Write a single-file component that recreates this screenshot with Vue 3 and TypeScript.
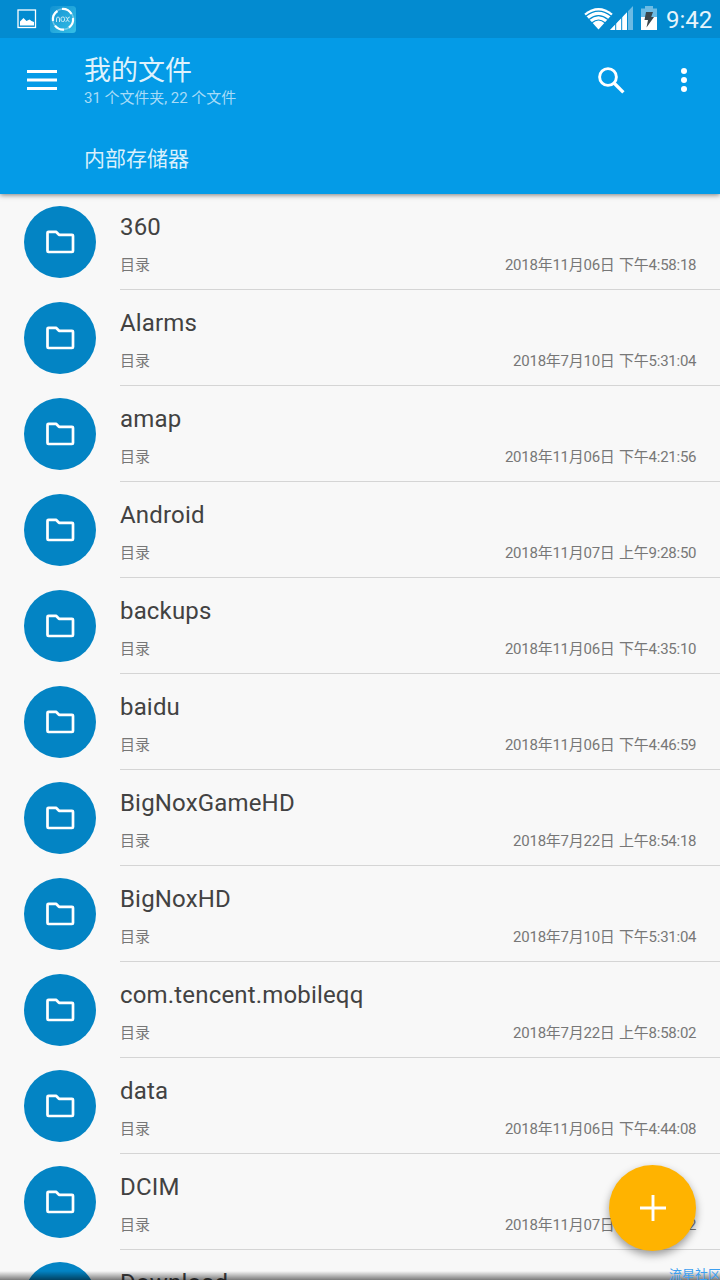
<script setup lang="ts">
interface Entry {
  name: string
  date: string
}

const entries: Entry[] = [
  { name: '360', date: '2018年11月06日 下午4:58:18' },
  { name: 'Alarms', date: '2018年7月10日 下午5:31:04' },
  { name: 'amap', date: '2018年11月06日 下午4:21:56' },
  { name: 'Android', date: '2018年11月07日 上午9:28:50' },
  { name: 'backups', date: '2018年11月06日 下午4:35:10' },
  { name: 'baidu', date: '2018年11月06日 下午4:46:59' },
  { name: 'BigNoxGameHD', date: '2018年7月22日 上午8:54:18' },
  { name: 'BigNoxHD', date: '2018年7月10日 下午5:31:04' },
  { name: 'com.tencent.mobileqq', date: '2018年7月22日 上午8:58:02' },
  { name: 'data', date: '2018年11月06日 下午4:44:08' },
  { name: 'DCIM', date: '2018年11月07日 上午9:28:52' },
  { name: 'Download', date: '' },
]
</script>

<template>
  <div class="screen">
    <div class="status">
      <svg class="s-pic" width="20" height="20" viewBox="0 0 20 20">
        <rect x="1" y="1" width="17.5" height="17.5" fill="none" stroke="#fff" stroke-width="1.3" />
        <path d="M3 16.500v-4l1.500-1.500 2-2 3 3 3-1.500 2 1.500 2.500 1v3.500z" fill="#fff" />
      </svg>
      <svg class="s-nox" width="26" height="27" viewBox="0 0 26 27">
        <defs>
          <linearGradient id="nox" x1="0" y1="0" x2="1" y2="1">
            <stop offset="0" stop-color="#1292d2" />
            <stop offset="1" stop-color="#35bfe6" />
          </linearGradient>
        </defs>
        <rect width="26" height="27" rx="3.500" fill="url(#nox)" />
        <g fill="none" stroke="#fff" stroke-width="2.200">
          <path d="M12 3a10.300 10.300 0 0 1 9.500 5" />
          <path d="M23 12a10.300 10.300 0 0 1-4 9.500" />
          <path d="M14 23.600a10.300 10.300 0 0 1-9-4" />
          <path d="M3 15a10.300 10.300 0 0 1 4.500-10" />
        </g>
        <circle cx="13" cy="13.300" r="10.300" fill="none" stroke="#fff" stroke-width="1.500" opacity=".35" />
        <g fill="none" stroke="#fff" stroke-width="1" opacity=".75">
          <path d="M6.500 16v-3q0-2 1.500-2t1.500 2v3" />
          <rect x="11" y="11" width="3.500" height="4.500" rx="1.500" />
          <path d="M15.500 11q1.500 0 2 2.300t2 2.300M19.800 11q-1.800 0-2.300 2.300t-2 2.300" />
        </g>
      </svg>
      <div class="grow"></div>
      <svg class="s-wifi" width="29" height="23" viewBox="0 0 29 23">
        <path d="M.3 6.800Q14.500-5 28.700 6.800L14.500 22.500z" fill="#fff" />
        <g fill="none" stroke="#038bd0" stroke-width="1.200">
          <path d="M2 9Q14.500-.7 27 9" />
          <path d="M5 12.500Q14.500 4.800 24 12.500" />
          <path d="M8 15.800Q14.500 10.200 21 15.800" />
        </g>
      </svg>
      <svg class="s-cell" width="23" height="24" viewBox="0 0 23 24">
        <path d="M0 24L23 0V24z" fill="#fff" opacity=".42" />
        <path d="M0 24L18 5.200V24z" fill="#fff" />
        <path d="M5.700 16v8M11.700 10v14M17.500 5v19" stroke="#038bd0" stroke-width="1" />
      </svg>
      <svg class="s-batt" width="16" height="24" viewBox="0 0 16 24">
        <path d="M0 2.500h4V0h8v2.500h4V11H0z" fill="#fff" opacity=".42" />
        <path d="M0 11h16v13H0z" fill="#fff" />
        <path d="M5 6h7l-1.800 5H13L5.500 21.500 7 14H3.500z" fill="#39454b" />
      </svg>
      <span class="clock">9:42</span>
    </div>

    <header class="appbar">
      <div class="toolbar">
        <svg class="menu" width="30" height="20" viewBox="0 0 30 20">
          <path d="M0 1.500h30M0 10h30M0 18.500h30" stroke="#fff" stroke-width="3" />
        </svg>
        <div class="titles">
          <div class="title">我的文件</div>
          <div class="subtitle">31 个文件夹, 22 个文件</div>
        </div>
        <svg class="search" width="27" height="27" viewBox="0 0 27 27" fill="none" stroke="#fff">
          <circle cx="10" cy="10" r="8.400" stroke-width="2.900" />
          <path d="M16 16l9.400 9.400" stroke-width="3.300" />
        </svg>
        <svg class="more" width="6" height="24" viewBox="0 0 6 24" fill="#fff">
          <circle cx="3" cy="3" r="3" /><circle cx="3" cy="12" r="3" /><circle cx="3" cy="21" r="3" />
        </svg>
      </div>
      <div class="crumb">内部存储器</div>
    </header>

    <main class="list">
      <div v-for="e in entries" :key="e.name" class="row">
        <div class="avatar">
          <svg width="30" height="24" viewBox="0 0 30 24">
            <path d="M3.500 1.800h7.500l3 3H27q1 0 1 1V21q0 1-1 1H3.500q-1 0-1-1V2.800q0-1 1-1z" fill="none" stroke="#fff" stroke-width="2.700" stroke-linejoin="round" />
          </svg>
        </div>
        <div class="info">
          <div class="name">{{ e.name }}</div>
          <div v-if="e.date" class="meta"><span class="kind">目录</span><span class="date">{{ e.date }}</span></div>
        </div>
      </div>
    </main>

    <div class="fade"></div>
    <div class="fab">
      <svg width="26" height="26" viewBox="0 0 26 26">
        <path d="M13 0v26M0 13h26" stroke="#fff" stroke-width="2.900" />
      </svg>
    </div>
    <div class="mark">流星社区</div>
  </div>
</template>

<style>
html,
body {
  margin: 0;
  overflow: hidden;
}
</style>

<style scoped>
.screen {
  position: relative;
  width: 720px;
  height: 1280px;
  overflow: hidden;
  background: #f8f8f8;
  font-family: Roboto, "Noto Sans CJK SC", sans-serif;
  display: flex;
  flex-direction: column;
}
.screen svg {
  display: block;
  flex: none;
}
.status {
  position: relative;
  z-index: 2;
  flex: none;
  height: 38px;
  background: #038bd0;
  display: flex;
  align-items: flex-start;
}
.s-pic { margin: 9px 0 0 17px; }
.s-nox { margin: 6px 0 0 13px; }
.grow { flex: 1; }
.s-wifi { margin-top: 7px; }
.s-cell { margin: 6px 0 0 -3px; }
.s-batt { margin: 6px 0 0 8px; }
.clock {
  width: 54px;
  margin-left: 9px;
  font-size: 24px;
  line-height: 40px;
  color: #e6f4fb;
  white-space: nowrap;
}
.appbar {
  position: relative;
  z-index: 1;
  flex: none;
  height: 156px;
  background: #049be7;
  box-shadow: 0 1px 5px rgba(0, 0, 0, 0.5);
  color: #fff;
}
.toolbar {
  height: 84px;
  display: flex;
  align-items: center;
  padding: 0 33px 0 27px;
}
.titles {
  flex: 1;
  margin-left: 27px;
  padding-top: 3px;
}
.title {
  font-size: 27px;
  line-height: 32px;
  color: #dff2fc;
}
.subtitle {
  font-size: 15px;
  line-height: 22px;
  letter-spacing: -0.05px;
  color: #a8dcf7;
}
.search { margin-right: 56px; }
.crumb {
  margin: 21px 0 0 84px;
  font-size: 21px;
  line-height: 32px;
  color: #d9f0fc;
}
.list {
  flex: none;
}
.row {
  height: 96px;
  display: flex;
}
.avatar {
  flex: none;
  width: 72px;
  height: 72px;
  margin: 12px 24px;
  border-radius: 50%;
  background: #0384c4;
  display: flex;
  align-items: center;
  justify-content: center;
}
.info {
  flex: 1;
  box-sizing: border-box;
  border-bottom: 1px solid #d5d5d5;
  padding: 17px 24px 0 0;
}
.name {
  font-size: 24px;
  line-height: 32px;
  letter-spacing: 0.17px;
  color: #424242;
}
.meta {
  margin-top: 10px;
  display: flex;
  justify-content: space-between;
  font-size: 15px;
  line-height: 24px;
  color: #777;
}
.date {
  letter-spacing: -0.25px;
  word-spacing: 1px;
  margin-right: -0.25px;
}
.fade {
  position: absolute;
  left: 0;
  right: 0;
  bottom: 0;
  height: 9px;
  background: linear-gradient(rgba(0, 0, 0, 0), rgba(0, 0, 0, 0.5));
}
.fab {
  position: absolute;
  left: 609px;
  top: 1165px;
  width: 87px;
  height: 86px;
  border-radius: 50%;
  background: #ffb300;
  box-shadow: 0 4px 8px rgba(0, 0, 0, 0.38);
  display: flex;
  align-items: center;
  justify-content: center;
}
.mark {
  position: absolute;
  left: 669px;
  top: 1266px;
  font-size: 13px;
  line-height: 18px;
  color: #3d9ff0;
  white-space: nowrap;
}
</style>
